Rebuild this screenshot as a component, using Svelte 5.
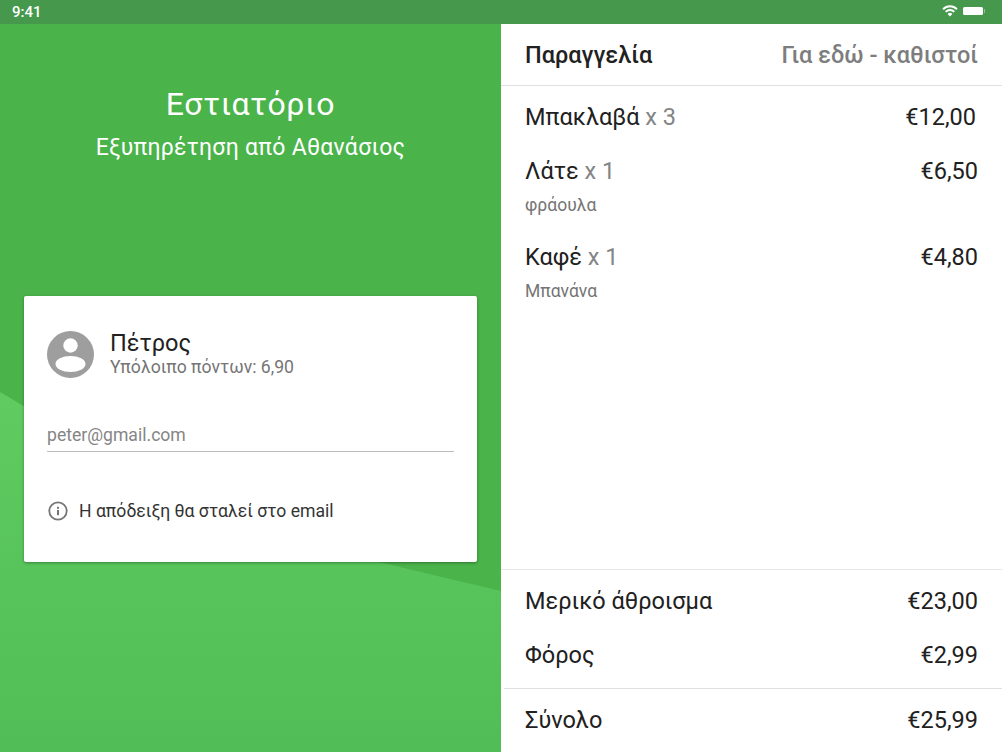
<script>
  const items = [
    { name: 'Μπακλαβά', qty: 'x 3', price: '€12,00' },
    { name: 'Λάτε', qty: 'x 1', price: '€6,50', note: 'φράουλα' },
    { name: 'Καφέ', qty: 'x 1', price: '€4,80', note: 'Μπανάνα' }
  ];
</script>

<div class="screen">
  <header class="status">
    <span class="time">9:41</span>
    <div class="status-icons">
      <svg width="16" height="12" viewBox="0 0 16 12" aria-hidden="true">
        <path fill="#fff" d="M8 11.5 5.6 8.9a3.4 3.4 0 0 1 4.8 0L8 11.5ZM4.3 7.6 3 6.2a7 7 0 0 1 10 0l-1.3 1.4a5.2 5.2 0 0 0-7.4 0ZM1.7 4.9.4 3.5a10.7 10.7 0 0 1 15.2 0l-1.3 1.4a8.9 8.9 0 0 0-12.6 0Z"/>
      </svg>
      <div class="battery"></div>
      <div class="battery-tip"></div>
    </div>
  </header>

  <main class="panes">
    <section class="left">
      <svg class="wave" viewBox="0 0 501 728" preserveAspectRatio="none" aria-hidden="true">
        <defs>
          <linearGradient id="waveFill" x1="0" y1="0" x2="0" y2="1">
            <stop offset="0" stop-color="#5fcb60" />
            <stop offset="1" stop-color="#50bd56" />
          </linearGradient>
        </defs>
        <path fill="url(#waveFill)" d="M0 368 C70 408 150 470 250 503 C300 520 420 548 501 567 V728 H0 Z" />
      </svg>
      <div class="venue">
        <h1>Εστιατόριο</h1>
        <p>Εξυπηρέτηση από Αθανάσιος</p>
      </div>
      <div class="card">
        <div class="user">
          <svg class="avatar" width="47" height="47" viewBox="0 0 47 47" aria-hidden="true">
            <circle cx="23.5" cy="23.5" r="23.5" fill="#9e9e9e" />
            <circle cx="23.5" cy="14.5" r="7.2" fill="#fff" />
            <ellipse cx="23.5" cy="33" rx="15" ry="8" fill="#fff" />
          </svg>
          <div>
            <div class="user-name">Πέτρος</div>
            <div class="user-points">Υπόλοιπο πόντων: 6,90</div>
          </div>
        </div>
        <div class="email">peter@gmail.com</div>
        <div class="notice">
          <svg width="20" height="20" viewBox="0 0 20 20" aria-hidden="true">
            <circle cx="10" cy="10" r="8.7" fill="none" stroke="#757575" stroke-width="1.8" />
            <rect x="9" y="9" width="2" height="5.2" fill="#757575" />
            <rect x="9" y="5.8" width="2" height="2" fill="#757575" />
          </svg>
          <span>Η απόδειξη θα σταλεί στο email</span>
        </div>
      </div>
    </section>

    <section class="right">
      <div class="order-head">
        <strong>Παραγγελία</strong>
        <span>Για εδώ - καθιστοί</span>
      </div>
      <div class="items">
        {#each items as item}
          <div class="item" class:has-note={item.note}>
            <div class="row">
              <span>{item.name} <em>{item.qty}</em></span>
              <span>{item.price}</span>
            </div>
            {#if item.note}<div class="note">{item.note}</div>{/if}
          </div>
        {/each}
      </div>
      <div class="totals">
        <div class="row sub"><span>Μερικό άθροισμα</span><span>€23,00</span></div>
        <div class="row sub"><span>Φόρος</span><span>€2,99</span></div>
      </div>
      <div class="row grand"><span>Σύνολο</span><span>€25,99</span></div>
    </section>
  </main>
</div>

<style>
  :global(body) {
    margin: 0;
    font-family: Roboto, "Noto Sans", sans-serif;
  }
  .screen {
    width: 1002px;
    height: 752px;
    display: flex;
    flex-direction: column;
    overflow: hidden;
    background: #fff;
  }
  .status {
    height: 24px;
    flex: none;
    display: flex;
    align-items: center;
    justify-content: space-between;
    padding: 0 17px 0 12px;
    background: #46984c;
    color: #fff;
    font-size: 15px;
    font-weight: 500;
    box-sizing: border-box;
  }
  .status-icons {
    display: flex;
    align-items: center;
    padding-bottom: 2px;
  }
  .battery {
    width: 20px;
    height: 8px;
    margin-left: 5px;
    background: #fff;
    border-radius: 1.5px;
  }
  .battery-tip {
    width: 1px;
    height: 4px;
    margin-left: 1px;
    background: rgba(255, 255, 255, 0.4);
  }
  .panes {
    flex: 1;
    display: flex;
    min-height: 0;
  }
  .left {
    width: 501px;
    flex: none;
    position: relative;
    background: #4ab34a;
    padding: 61px 24px 0;
    box-sizing: border-box;
    overflow: hidden;
  }
  .wave {
    position: absolute;
    inset: 0;
    width: 100%;
    height: 100%;
  }
  .venue,
  .card {
    position: relative;
  }
  .venue {
    text-align: center;
    color: #fff;
  }
  h1 {
    margin: 0;
    font-size: 32px;
    line-height: 38px;
    font-weight: 400;
    letter-spacing: 0.7px;
  }
  .venue p {
    margin: 11px 0 0;
    font-size: 23px;
    line-height: 28px;
    letter-spacing: 0.28px;
  }
  .card {
    margin-top: 134px;
    height: 266px;
    background: #fff;
    border-radius: 2px;
    box-shadow: 0 1px 3px rgba(0, 0, 0, 0.35);
    padding: 34px 23px 0;
    box-sizing: border-box;
  }
  .user {
    display: flex;
    align-items: center;
    gap: 16px;
  }
  .avatar {
    flex: none;
    margin-top: 1px;
  }
  .user-name {
    font-size: 23.5px;
    line-height: 26px;
    color: #212121;
  }
  .user-points {
    font-size: 17.6px;
    line-height: 22px;
    color: #757575;
  }
  .email {
    margin-top: 43px;
    padding-bottom: 2px;
    border-bottom: 1px solid #bdbdbd;
    font-size: 17.6px;
    line-height: 28px;
    color: #858585;
  }
  .notice {
    margin-top: 44px;
    display: flex;
    align-items: center;
    gap: 11px;
    margin-left: 1px;
    font-size: 17.6px;
    line-height: 30px;
    color: #333;
  }
  .right {
    flex: 1;
    display: flex;
    flex-direction: column;
    min-width: 0;
    color: #212121;
  }
  .order-head {
    height: 61px;
    flex: none;
    display: flex;
    align-items: center;
    justify-content: space-between;
    padding: 0 24px;
    border-bottom: 1px solid #e0e0e0;
    font-size: 23.5px;
    font-weight: 500;
  }
  .order-head span {
    color: #7d7d7d;
  }
  .order-head strong {
    font-weight: 500;
  }
  .items {
    flex: 1;
    padding-top: 13px;
  }
  .row {
    display: flex;
    justify-content: space-between;
    padding: 0 24px;
    font-size: 23.5px;
    line-height: 36px;
  }
  .item:first-child .row {
    padding-right: 26px;
  }
  .row em {
    font-style: normal;
    color: #858585;
  }
  .item {
    margin-bottom: 18px;
  }
  .item.has-note {
    margin-bottom: 24px;
  }
  .note {
    padding-left: 24px;
    margin-top: 6px;
    font-size: 17.5px;
    line-height: 20px;
    color: #757575;
  }
  .totals {
    border-top: 1px solid #e8e8e8;
    padding: 13px 0 15px;
    display: flex;
    flex-direction: column;
    gap: 18px;
  }
  .grand {
    border-top: 1px solid #e0e0e0;
    margin-left: 3px;
    padding-left: 21px;
    padding-bottom: 2px;
    height: 64px;
    align-items: center;
    box-sizing: border-box;
  }
</style>
